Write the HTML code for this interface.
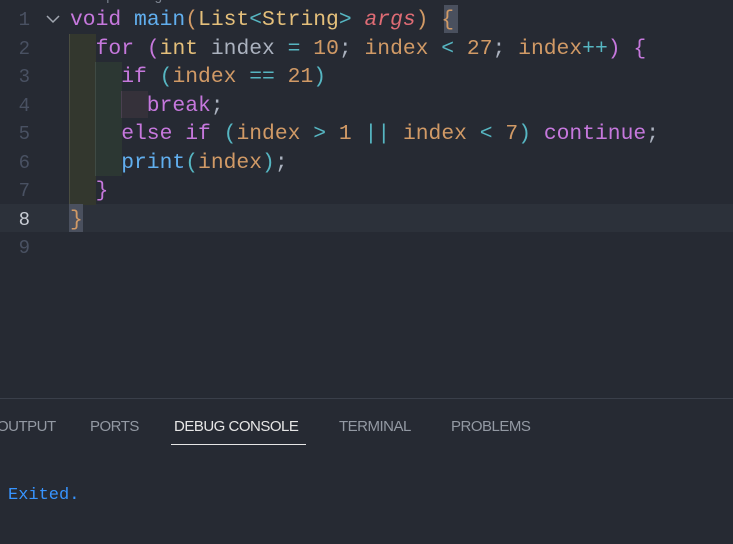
<!DOCTYPE html>
<html><head><style>
body{margin:0;width:733px;height:544px;background:#262a33;overflow:hidden;position:relative;font-family:"Liberation Mono",monospace}
.ln{position:absolute;left:0;width:30px;text-align:right;font-size:19px;color:#495162;line-height:28.5px}
.code{position:absolute;left:70px;font-size:21.33px;line-height:28.5px;white-space:pre;color:#abb2bf}
.k{color:#c678dd}.f{color:#61afef}.t{color:#e5c07b}.a{color:#e06c75;font-style:italic}.v{color:#d19a66}.o{color:#56b6c2}.n{color:#d19a66}
.bg{position:absolute}
.tab{position:absolute;top:418px;font-family:"Liberation Sans",sans-serif;font-size:15px;color:#9399a3;letter-spacing:-0.5px}
</style></head><body>
<div class="bg" style="left:0;top:204px;width:733px;height:28px;background:#2c313a"></div>
<div class="bg" style="left:69px;top:34px;width:26px;height:171px;background:#33372e;border-left:1px solid #4a4d40"></div>
<div class="bg" style="left:95px;top:62px;width:26px;height:114px;background:#2c3733;border-left:1px solid #3f4a44"></div>
<div class="bg" style="left:121px;top:91px;width:26px;height:27px;background:#35313a;border-left:1px solid #4a4050"></div>
<div class="bg" style="left:69px;top:204px;width:14px;height:28px;background:#4a505e"></div>
<div class="bg" style="left:444px;top:5px;width:14px;height:28px;background:#4a505e"></div>
<div class="code" style="top:-17px;font-size:14px;color:#7d8490;left:70px">Run | Debug</div>
<div class="ln" style="top:6px">1</div><div class="ln" style="top:34.5px">2</div><div class="ln" style="top:63px">3</div><div class="ln" style="top:91.5px">4</div><div class="ln" style="top:120px">5</div><div class="ln" style="top:148.5px">6</div><div class="ln" style="top:177px">7</div><div class="ln" style="top:205.5px;color:#c8ccd4">8</div><div class="ln" style="top:234px">9</div>
<svg style="position:absolute;left:45px;top:13px" width="16" height="12"><path d="M2 3 L8 9 L14 3" stroke="#a0a6b0" stroke-width="1.5" fill="none"/></svg>
<div class="code" style="top:6px"><span class="k">void</span> <span class="f">main</span><span class="v">(</span><span class="t">List</span><span class="o">&lt;</span><span class="t">String</span><span class="o">&gt;</span> <span class="a">args</span><span class="v">)</span> <span class="v">{</span>
  <span class="k">for</span> <span class="k">(</span><span class="t">int</span> index <span class="o">=</span> <span class="n">10</span>; <span class="v">index</span> <span class="o">&lt;</span> <span class="n">27</span>; <span class="v">index</span><span class="o">++</span><span class="k">)</span> <span class="k">{</span>
    <span class="k">if</span> <span class="o">(</span><span class="v">index</span> <span class="o">==</span> <span class="n">21</span><span class="o">)</span>
      <span class="k">break</span>;
    <span class="k">else</span> <span class="k">if</span> <span class="o">(</span><span class="v">index</span> <span class="o">&gt;</span> <span class="n">1</span> <span class="o">||</span> <span class="v">index</span> <span class="o">&lt;</span> <span class="n">7</span><span class="o">)</span> <span class="k">continue</span>;
    <span class="f">print</span><span class="o">(</span><span class="v">index</span><span class="o">)</span>;
  <span class="k">}</span>
<span class="v">}</span></div>
<div class="bg" style="left:0;top:398px;width:733px;height:1px;background:#3a3f4a"></div>
<div class="tab" style="left:-3px">OUTPUT</div>
<div class="tab" style="left:90px">PORTS</div>
<div class="tab" style="left:174px;color:#e6e6e6">DEBUG CONSOLE</div>
<div class="bg" style="left:171px;top:444px;width:135px;height:1px;background:#e6e6e6"></div>
<div class="tab" style="left:339px">TERMINAL</div>
<div class="tab" style="left:451px">PROBLEMS</div>
<div style="position:absolute;left:8px;top:486px;font-size:17px;color:#3794ff;font-family:'Liberation Mono',monospace">Exited.</div>
</body></html>
